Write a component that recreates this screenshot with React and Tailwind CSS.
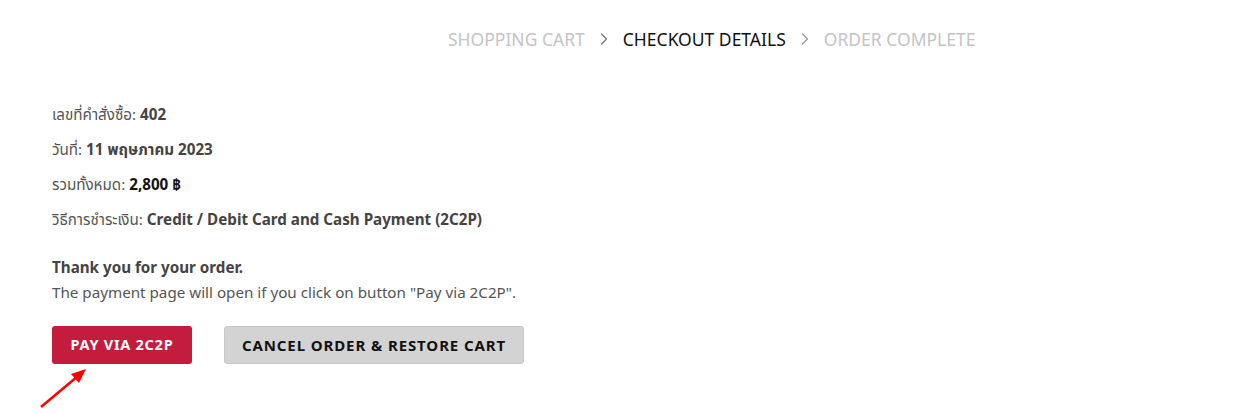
import React from 'react';
import { ChevronRight } from 'lucide-react';

const details = [
  { label: 'เลขที่คำสั่งซื้อ:', value: '402' },
  { label: 'วันที่:', value: '11 พฤษภาคม 2023' },
  { label: 'รวมทั้งหมด:', value: '2,800 ฿', dark: true },
  { label: 'วิธีการชำระเงิน:', value: 'Credit / Debit Card and Cash Payment (2C2P)' },
];

const App = () => {
  return (
    <div
      className="relative w-[1235px] h-[415px] bg-white overflow-hidden text-[#555]"
      style={{ fontFamily: '"Noto Sans", "Noto Sans Thai", sans-serif' }}
    >
      {/* Steps */}
      <nav className="flex items-center pl-[448px] pt-[26px] text-[17.5px] uppercase leading-[26px]">
        <span className="text-[#c4c4c4]">Shopping Cart</span>
        <ChevronRight className="w-5 h-5 mx-[9px] text-[#777]" strokeWidth={1.5} />
        <span className="text-[#111]">Checkout Details</span>
        <ChevronRight className="w-5 h-5 mx-[9px] text-[#999]" strokeWidth={1.5} />
        <span className="text-[#c4c4c4]">Order Complete</span>
      </nav>

      {/* Order summary */}
      <ul className="pl-[52px] pt-[45px] text-[15.2px] leading-[35px]">
        {details.map((d) => (
          <li key={d.label}>
            {d.label}{' '}
            <strong className={d.dark ? 'text-[#111]' : 'text-[#444]'}>{d.value}</strong>
          </li>
        ))}
      </ul>

      <div className="pl-[52px] pt-[18px] text-[15.2px] leading-[25px]">
        <p className="font-bold text-[#444]">Thank you for your order.</p>
        <p>The payment page will open if you click on button "Pay via 2C2P".</p>
      </div>

      <div className="flex gap-[32px] pl-[52px] pt-[21px]">
        <button className="h-[38px] w-[140px] rounded-[3px] bg-[#c41c3c] text-white text-[14.5px] font-bold uppercase tracking-[0.05em]">
          Pay via 2C2P
        </button>
        <button className="h-[38px] w-[300px] rounded-[3px] bg-[#d3d3d3] border border-[#c8c8c8] text-[#111] text-[15px] font-bold uppercase tracking-[0.06em]">
          Cancel Order &amp; Restore Cart
        </button>
      </div>

      {/* Annotation arrow */}
      <svg className="absolute left-0 top-0" width="1235" height="415" viewBox="0 0 1235 415">
        <line x1="41" y1="407" x2="78" y2="376" stroke="#ff0000" strokeWidth="2.5" />
        <polygon points="86,369 71,374 79,383" fill="#ff0000" />
      </svg>
    </div>
  );
};

export default App;
